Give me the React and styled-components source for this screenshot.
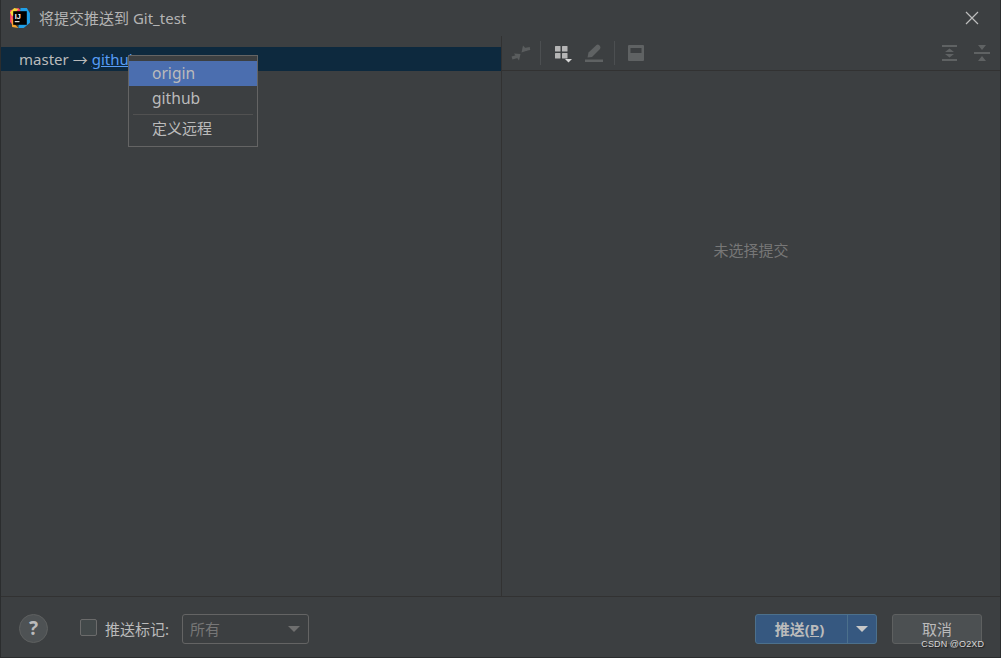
import React from "react";
import styled, { createGlobalStyle } from "styled-components";

const Global = createGlobalStyle`
  html, body { margin: 0; padding: 0; background: #3c3f41; }
  * { box-sizing: border-box; }
`;
const FONT = `"Noto Sans", "Noto Sans CJK SC", sans-serif`;

const Win = styled.div`
  position: relative; width: 1001px; height: 658px; background: #3c3f41;
  border-left: 1px solid #2b2d2e; border-right: 1px solid #2b2d2e; border-bottom: 1px solid #2b2d2e;
  display: flex; flex-direction: column; font-family: ${FONT}; color: #bbbbbb; font-size: 15px; overflow: hidden;
`;
const TitleBar = styled.div`
  height: 36px; flex: none; display: flex; align-items: center; padding: 0 21px 0 8px; gap: 8px;
`;
const Title = styled.div` flex: 1; font-size: 15px; color: #b4b4b4; line-height: 20px; `;
const Body = styled.div` flex: 1; display: flex; min-height: 0; `;
const LeftPane = styled.div` width: 501px; flex: none; padding-top: 11px; border-right: 1px solid #323232; `;
const BranchRow = styled.div`
  height: 24px; width: 500px; background: #0d293e; padding-left: 18px; display: flex; align-items: center; gap: 4px; font-size: 15px; color: #bbbbbb;
`;
const ArrowGlyph = styled.span` font-family: "Noto Sans CJK SC", sans-serif; width: 15px; display: flex; justify-content: center; `;
const RemoteLink = styled.span` color: #589df6; text-decoration: underline; `;
const RightPane = styled.div` flex: 1; display: flex; flex-direction: column; min-width: 0; `;
const Toolbar = styled.div`
  height: 35px; flex: none; border-bottom: 1px solid #323232; display: flex; align-items: center; padding: 0 8px 0 9px;
`;
const ToolIcon = styled.svg` width: 20px; height: 20px; flex: none; display: block; margin-right: ${p => p.$mr || 0}px; `;
const ToolSep = styled.div` width: 1px; height: 24px; background: #4c4f51; margin-right: ${p => p.$mr}px; `;
const Spacer = styled.div` flex: 1; `;
const EmptyState = styled.div`
  flex: 1; display: flex; justify-content: center; padding-top: 169px; font-size: 15px; color: #777777; line-height: 20px;
`;
const Footer = styled.div`
  height: 61px; flex: none; border-top: 1px solid #323232; display: flex; align-items: center; padding: 3px 18px 0 18px;
`;
const Help = styled.div`
  width: 29px; height: 29px; border-radius: 50%; background: #4e5254; border: 1px solid #5e6060; display: flex; align-items: center; justify-content: center;
  color: #bbbbbb; font-weight: 700; font-size: 19px; margin: -1px 32px 0 0;
`;
const Check = styled.div` width: 17px; height: 17px; border: 1px solid #6b6b6b; border-radius: 2px; background: #43494a; margin: -2px 8px 0 0; `;
const CheckLabel = styled.div` font-size: 15px; color: #bbbbbb; margin: -1px 13px 0 0; `;
const Combo = styled.div`
  width: 127px; height: 30px; border: 1px solid #646464; border-radius: 3px; display: flex; align-items: center; justify-content: space-between;
  padding: 0 8px 0 7px; color: #777777; font-size: 15px;
`;
const Arrow = styled.span`
  width: 0; height: 0; border-left: 6px solid transparent; border-right: 6px solid transparent; border-top: 6px solid ${p => p.$c};
`;
const SplitButton = styled.div`
  margin-left: auto; width: 122px; height: 30px; background: #365880; border: 1px solid #4c708c; border-radius: 3px; display: flex; align-items: stretch; color: #bbbbbb; font-weight: 700; font-size: 15px;
`;
const SplitMain = styled.div` flex: 1; display: flex; align-items: center; justify-content: center; border-right: 1px solid #4c708c; padding-right: 4px; `;
const SplitArrow = styled.div` width: 28px; flex: none; display: flex; align-items: center; justify-content: center; `;
const CancelButton = styled.div`
  width: 90px; height: 30px; margin-left: 15px; background: #4c5052; border: 1px solid #5e6060; border-radius: 3px; display: flex; align-items: center; justify-content: center; font-size: 15px; color: #bbbbbb;
`;
const Menu = styled.div`
  position: absolute; left: 127px; top: 55px; width: 130px; height: 92px; background: #3c3f41; border: 1px solid #646464; padding-top: 5px;
`;
const MenuItem = styled.div`
  height: 25px; padding: 0 0 2px 23px; display: flex; align-items: center; font-size: ${p => (p.$cjk ? 15 : 15.6)}px; color: #bbbbbb; background: ${p => (p.$active ? "#4b6eaf" : "transparent")};
`;
const MenuSep = styled.div` height: 1px; background: #515151; margin: 3px 4px 1px; `;
const Watermark = styled.div`
  position: absolute; right: 16px; bottom: 8px; font-family: "Liberation Sans", sans-serif; font-size: 9px; letter-spacing: 0.1px; color: #d8d8d8; text-shadow: 1px 1px 1px #222;
`;

const Logo = () => (
  <svg width="22" height="22" viewBox="0 0 21 21">
    <path d="M1 3 L9 1 L12 4 L4 18 L1 14 Z" fill="#fc3d6d" />
    <path d="M2 8 L5 16 L9 20 L3 19 Z" fill="#f7a42c" />
    <path d="M11 1 L17 1 L20 6 L20 15 L14 20 L9 20 Z" fill="#1f9fe8" />
    <path d="M1 5 L5 1 L9 2 L3 9 Z" fill="#f5d63a" />
    <rect x="4" y="4" width="13" height="13" fill="#000" />
    <text x="5.5" y="11" fontFamily="Liberation Sans" fontSize="7" fontWeight="700" fill="#fff">IJ</text>
    <rect x="5.5" y="13.5" width="4.5" height="1" fill="#fff" />
  </svg>
);

const Close = () => (
  <svg width="14" height="14" viewBox="0 0 14 14">
    <path d="M1 1 L13 13 M13 1 L1 13" stroke="#bdbdbd" strokeWidth="1.2" />
  </svg>
);

export default function App() {
  return (
    <>
      <Global />
      <Win>
        <TitleBar>
          <Logo />
          <Title>将提交推送到 Git_test</Title>
          <Close />
        </TitleBar>
        <Body>
          <LeftPane>
            <BranchRow>
              <span>master</span>
              <ArrowGlyph>→</ArrowGlyph>
              <RemoteLink>github</RemoteLink>
            </BranchRow>
          </LeftPane>
          <RightPane>
            <Toolbar>
              <ToolIcon viewBox="0 0 20 20" $mr={9}>
                <path d="M10.5 9.5 L12 2.5 L16.5 7.5 Z" fill="#5a5d5e" />
                <path d="M13.5 6.5 L19 5.5" stroke="#5a5d5e" strokeWidth="3" />
                <path d="M9.5 11 L3 10.5 L8 17.5 Z" fill="#5a5d5e" />
                <path d="M6 13.5 L1 15" stroke="#5a5d5e" strokeWidth="3" />
              </ToolIcon>
              <ToolSep $mr={13} />
              <ToolIcon viewBox="0 0 20 20" $mr={10}>
                <rect x="1" y="3" width="5.5" height="5.5" rx="0.5" fill="#b5b5b5" />
                <rect x="8" y="3" width="5.5" height="5.5" rx="0.5" fill="#b5b5b5" />
                <rect x="1" y="10" width="5.5" height="5.5" rx="0.5" fill="#b5b5b5" />
                <rect x="8" y="10" width="5.5" height="5.5" rx="0.5" fill="#b5b5b5" />
                <path d="M11 16 H18 L14.5 19.5 Z" fill="#d8d8d8" />
              </ToolIcon>
              <ToolIcon viewBox="0 0 20 20" $mr={10}>
                <path d="M3.5 14.5 L4.5 9.5 L12.5 2 Q14 1 15.5 2.5 L16 3 Q17 4.5 16 6 L8 14 Z" fill="#5f6263" />
                <rect x="1" y="16.5" width="18" height="2.5" fill="#5f6263" />
              </ToolIcon>
              <ToolSep $mr={11} />
              <ToolIcon viewBox="0 0 20 20">
                <rect x="2" y="2" width="16" height="16" rx="1" fill="#5f6263" />
                <rect x="4.5" y="5" width="11" height="5" fill="#3c3f41" />
              </ToolIcon>
              <Spacer />
              <ToolIcon viewBox="0 0 20 20" $mr={12}>
                <rect x="2" y="2" width="15" height="2" fill="#5f6263" />
                <rect x="2" y="16" width="15" height="2" fill="#5f6263" />
                <path d="M5 9 L9.5 5.5 L14 9 Z M5 11 H14 L9.5 14.5 Z" fill="#5f6263" />
              </ToolIcon>
              <ToolIcon viewBox="0 0 20 20">
                <rect x="2" y="9" width="16" height="2" fill="#5f6263" />
                <path d="M6 2 H14 L10 7 Z M6 18 H14 L10 13 Z" fill="#5f6263" />
              </ToolIcon>
            </Toolbar>
            <EmptyState>未选择提交</EmptyState>
          </RightPane>
        </Body>
        <Footer>
          <Help>?</Help>
          <Check />
          <CheckLabel>推送标记:</CheckLabel>
          <Combo>
            <span>所有</span>
            <Arrow $c="#6f6f6f" />
          </Combo>
          <SplitButton>
            <SplitMain>推送(<u>P</u>)</SplitMain>
            <SplitArrow><Arrow $c="#c8c8c8" /></SplitArrow>
          </SplitButton>
          <CancelButton>取消</CancelButton>
        </Footer>
        <Menu>
          <MenuItem $active>origin</MenuItem>
          <MenuItem>github</MenuItem>
          <MenuSep />
          <MenuItem $cjk>定义远程</MenuItem>
        </Menu>
        <Watermark>CSDN @O2XD</Watermark>
      </Win>
    </>
  );
}
